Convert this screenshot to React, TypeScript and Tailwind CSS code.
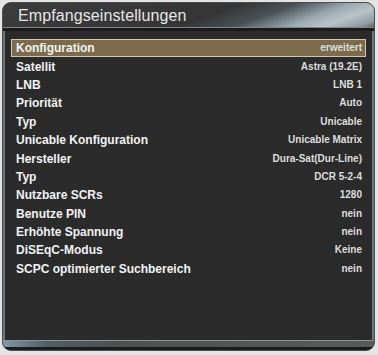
import React from "react";

const rows: [string, string][] = [
  ["Konfiguration", "erweitert"],
  ["Satellit", "Astra (19.2E)"],
  ["LNB", "LNB 1"],
  ["Priorität", "Auto"],
  ["Typ", "Unicable"],
  ["Unicable Konfiguration", "Unicable Matrix"],
  ["Hersteller", "Dura-Sat(Dur-Line)"],
  ["Typ", "DCR 5-2-4"],
  ["Nutzbare SCRs", "1280"],
  ["Benutze PIN", "nein"],
  ["Erhöhte Spannung", "nein"],
  ["DiSEqC-Modus", "Keine"],
  ["SCPC optimierter Suchbereich", "nein"],
];

export default function App() {
  return (
    <div
      className="w-[378px] h-[355px] bg-[#e4e4e4] pt-[2px] pl-[2px] pr-[3px] pb-[4px]"
      style={{ fontFamily: '"Liberation Sans", Arial, sans-serif' }}
    >
      <div className="flex flex-col h-full rounded-[9px] overflow-hidden border border-[#4a4f52] bg-[#2b2b2b]">
        {/* title bar */}
        <div className="h-[24px] flex items-center pl-[15px] pt-[1px] bg-[linear-gradient(160deg,#3c3c3c_0%,#353535_55%,#4a5358_68%,#9aa9b0_80%,#b9c4c8_88%,#8e9ba1_96%,#5d666a_100%)]">
          <span className="text-[16px] text-[#e6e6e6] tracking-[0.1px] leading-none">
            Empfangseinstellungen
          </span>
        </div>
        <div className="h-[1px] bg-[#7c8588]" />
        <div className="h-[3px] bg-[#1b1b1b]" />
        {/* body */}
        <div className="flex-1 flex flex-col border-l-[2px] border-r-[2px] border-l-[#6d7478] border-r-[#6d7478] bg-[#2b2b2b] pt-[8px] px-[6px]">
          {rows.map(([label, value], i) => (
            <div
              key={i}
              className={
                "h-[18.4px] flex items-center justify-between pl-[5px] pr-[4px] " +
                (i === 0
                  ? "bg-[#7b6b4b] outline outline-1 outline-[#cfc6ac] -outline-offset-1"
                  : "")
              }
            >
              <span className="text-[12px] font-bold text-[#f2f2f2] leading-none">
                {label}
              </span>
              <span className="text-[10px] font-bold text-[#dedede] leading-none">
                {value}
              </span>
            </div>
          ))}
        </div>
        {/* bottom bar */}
        <div className="h-[1px] bg-[#8a9396]" />
        <div className="h-[6px] bg-[linear-gradient(90deg,#7f9aa6_0%,#4f5e66_12%,#505050_30%,#5a5a5a_100%)]" />
        <div className="h-[3px] bg-[#1c1c1c]" />
      </div>
    </div>
  );
}
